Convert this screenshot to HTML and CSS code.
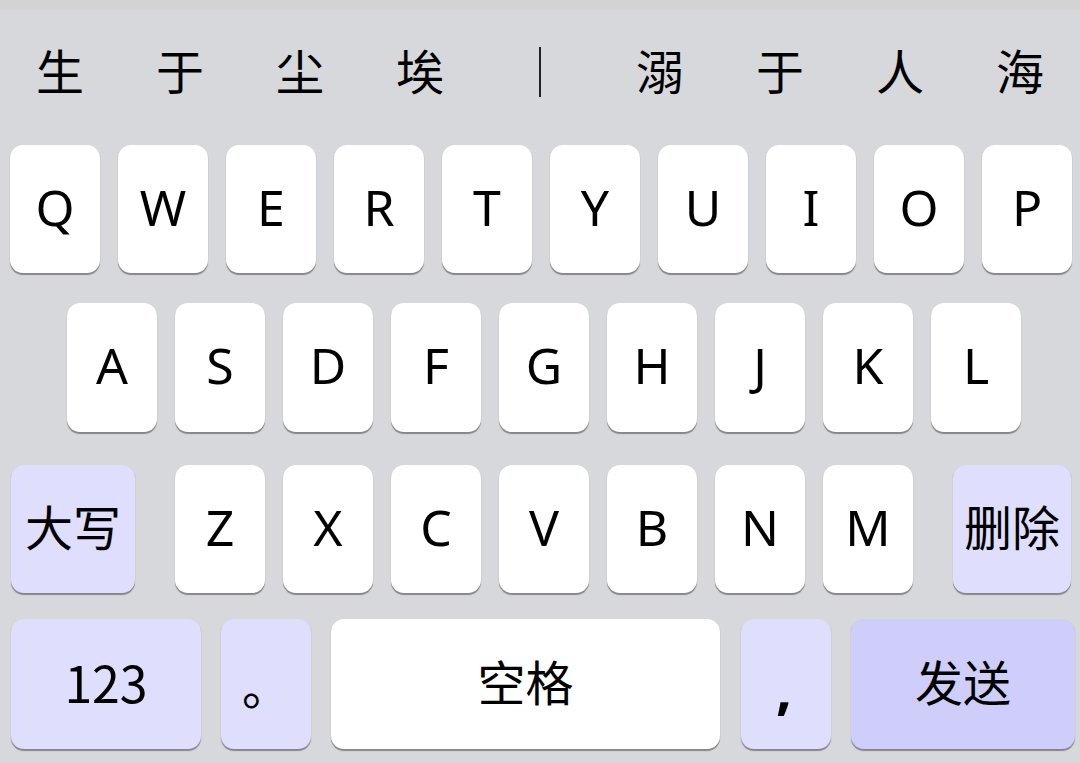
FILE: index.html
```html
<!DOCTYPE html>
<html lang="zh">
<head>
<meta charset="utf-8">
<title>Keyboard</title>
<link rel="stylesheet" href="styles.css">
</head>
<body>
<div class="topstrip"></div>
<div class="candidates">
  <span class="cand">生</span>
  <span class="cand">于</span>
  <span class="cand">尘</span>
  <span class="cand">埃</span>
  <span class="cand"><span class="sep"></span></span>
  <span class="cand">溺</span>
  <span class="cand">于</span>
  <span class="cand">人</span>
  <span class="cand">海</span>
</div>
<div class="keyboard">
  <div class="row row1">
    <div class="key">Q</div><div class="key">W</div><div class="key">E</div><div class="key">R</div><div class="key">T</div>
    <div class="key">Y</div><div class="key">U</div><div class="key">I</div><div class="key">O</div><div class="key">P</div>
  </div>
  <div class="row row2">
    <div class="key">A</div><div class="key">S</div><div class="key">D</div><div class="key">F</div><div class="key">G</div>
    <div class="key">H</div><div class="key">J</div><div class="key">K</div><div class="key">L</div>
  </div>
  <div class="row row3">
    <div class="key fn shift cjk">大写</div>
    <div class="letters">
      <div class="key">Z</div><div class="key">X</div><div class="key">C</div><div class="key">V</div>
      <div class="key">B</div><div class="key">N</div><div class="key">M</div>
    </div>
    <div class="key fn del cjk">删除</div>
  </div>
  <div class="row row4">
    <div class="key fn num">123</div>
    <div class="key fn punct period"><span>。</span></div>
    <div class="key space cjk">空格</div>
    <div class="key fn comma"><span>,</span></div>
    <div class="key send cjk">发送</div>
  </div>
</div>
</body>
</html>
```

FILE: styles.css
```css
html, body {
  margin: 0;
  padding: 0;
}
body {
  width: 1080px;
  height: 763px;
  overflow: hidden;
  background: #d7d8dc;
  font-family: "Noto Sans", "Noto Sans CJK SC", sans-serif;
  color: #000;
}
.topstrip {
  height: 10px;
  background: #d3d3d3;
}
.candidates {
  display: grid;
  grid-template-columns: repeat(9, 120px);
  height: 126px;
  align-items: center;
}
.cand {
  display: flex;
  justify-content: center;
  align-items: center;
  font-family: "Noto Sans CJK SC", sans-serif;
  font-size: 48px;
  line-height: 1;
  padding-bottom: 8px;
}
.sep {
  display: block;
  width: 1.5px;
  height: 50px;
  background: #222;
  margin-top: 6px;
}
.keyboard {
  display: flex;
  flex-direction: column;
}
.row {
  display: flex;
  gap: 18px;
}
.row1 {
  margin-top: 9px;
  padding-left: 10px;
  height: 128px;
}
.row2 {
  margin-top: 30px;
  padding-left: 67px;
  height: 129px;
}
.row3 {
  margin-top: 33px;
  padding-left: 11px;
  height: 128px;
  gap: 40px;
}
.row3 .letters {
  display: flex;
  gap: 18px;
}
.row4 {
  margin-top: 26px;
  padding-left: 11px;
  height: 130px;
  gap: 20px;
}
.key {
  width: 90px;
  height: 100%;
  box-sizing: border-box;
  background: #ffffff;
  border-radius: 13px;
  box-shadow: 0 1.5px 1px #86868a;
  display: flex;
  justify-content: center;
  align-items: center;
  font-family: "Noto Sans", sans-serif;
  font-size: 50px;
  line-height: 1;
  padding-bottom: 5px;
}
.cjk {
  font-family: "Noto Sans CJK SC", sans-serif;
  font-size: 48px;
  padding-bottom: 9px;
}
.fn {
  background: #dfdefd;
}
.shift {
  width: 124px;
}
.del {
  width: 118px;
}
.num {
  width: 190px;
  font-family: "Noto Sans CJK SC", sans-serif;
  font-size: 50px;
  padding-bottom: 6px;
}
.punct {
  font-family: "Noto Sans CJK SC", sans-serif;
  font-size: 48px;
}
.period span {
  position: relative;
  left: 0;
  top: 2px;
}
.comma {
  font-family: "Noto Sans", sans-serif;
  font-size: 56px;
  font-weight: 700;
}
.comma span {
  position: relative;
  top: 5px;
  left: -2px;
}
.space {
  width: 389px;
}
.row4 .comma {
  margin-left: 1px;
}
.send {
  width: 224px;
  background: #cfcefb;
}
```
